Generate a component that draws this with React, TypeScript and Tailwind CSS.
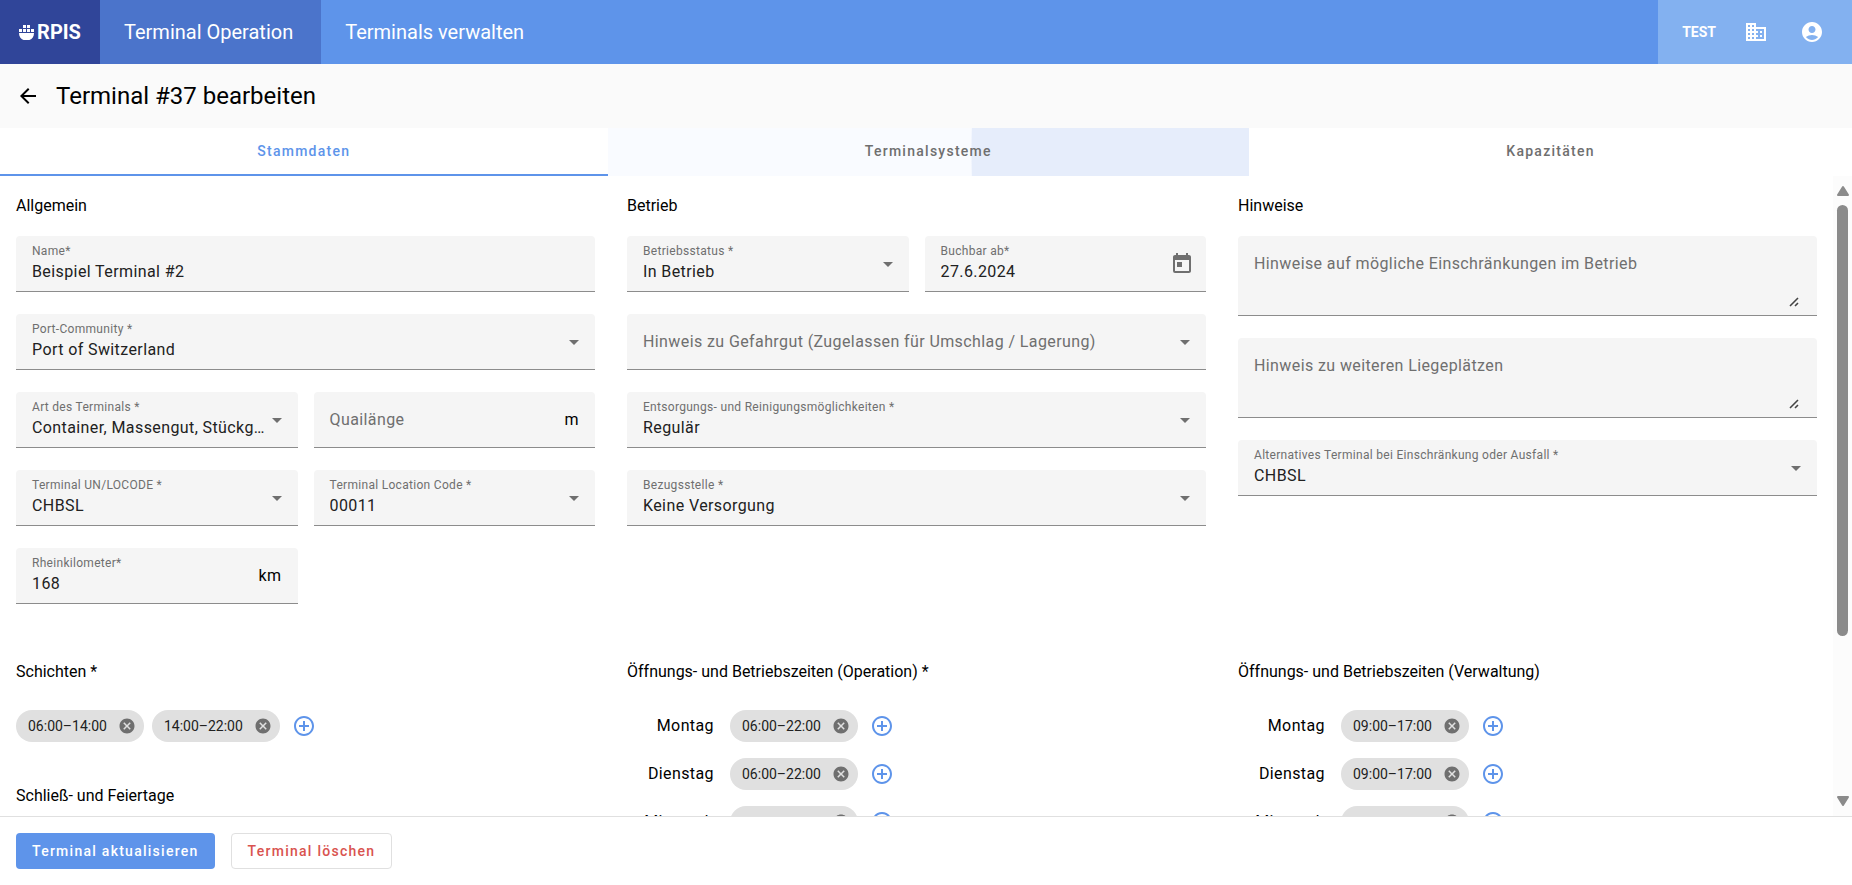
import { useId, type ReactNode } from "react";
import {
  MdAccountCircle,
  MdAddCircleOutline,
  MdArrowBack,
  MdArrowDropDown,
  MdCancel,
  MdDomain,
  MdToday,
} from "react-icons/md";

const DAYS = ["Montag", "Dienstag", "Mittwoch", "Donnerstag", "Freitag", "Samstag", "Sonntag"];

function Logo() {
  return (
    <svg viewBox="0 0 15 15" className="size-[15px] fill-white" aria-hidden="true">
      <rect x="4" y="0" width="3" height="3" />
      <rect x="8" y="0" width="3" height="3" />
      <rect x="0" y="4" width="3" height="3" />
      <rect x="4" y="4" width="3" height="3" />
      <rect x="8" y="4" width="3" height="3" />
      <rect x="12" y="4" width="3" height="3" />
      <path d="M0 8h15c0 4.500-3 7.500-7.500 7.500S0 12.500 0 8z" />
    </svg>
  );
}

type FieldProps = { label: string; value?: string };

const BOX = "relative h-14 min-w-0 rounded-t bg-[#f5f5f5] border-b border-[#8c8c8c]";
const FLOAT_LABEL =
  "pointer-events-none absolute left-4 top-2 text-xs leading-[14px] tracking-wide text-[#6f6f6f]";
const EMPTY_LABEL =
  "pointer-events-none absolute left-4 top-4 text-base leading-6 tracking-wide text-[#6f6f6f]";
const CONTROL =
  "h-full w-full truncate appearance-none bg-transparent pl-4 pt-5 pb-1 text-base leading-6 tracking-wide text-[#212121] outline-none";

function TextField({ label, value, suffix }: FieldProps & { suffix?: ReactNode }) {
  const id = useId();
  return (
    <div className={`${BOX} flex items-center`}>
      <label htmlFor={id} className={value ? FLOAT_LABEL : EMPTY_LABEL}>
        {label}
      </label>
      <input id={id} defaultValue={value} className={CONTROL} />
      {suffix && <span className="shrink-0 pr-4 text-base tracking-wide text-black">{suffix}</span>}
    </div>
  );
}

function DateField({ label, value }: FieldProps) {
  const id = useId();
  return (
    <div className={`${BOX} flex items-center`}>
      <label htmlFor={id} className={FLOAT_LABEL}>
        {label}
      </label>
      <input id={id} defaultValue={value} className={CONTROL} />
      <button type="button" aria-label="Kalender öffnen" className="shrink-0 px-3 text-[#6f6f6f]">
        <MdToday className="size-6" />
      </button>
    </div>
  );
}

function SelectField({ label, value }: FieldProps) {
  const id = useId();
  return (
    <div className={BOX}>
      <label htmlFor={id} className={value ? FLOAT_LABEL : EMPTY_LABEL}>
        {label}
      </label>
      <select id={id} className={`${CONTROL} pr-7`}>
        <option>{value ?? ""}</option>
      </select>
      <MdArrowDropDown className="pointer-events-none absolute right-[9px] top-4 size-6 text-[#6f6f6f]" />
    </div>
  );
}

function NoteField({ label }: FieldProps) {
  const id = useId();
  return (
    <div className="relative flex h-20 rounded-t border-b border-[#8c8c8c] bg-[#f5f5f5]">
      <label htmlFor={id} className={EMPTY_LABEL}>
        {label}
      </label>
      <textarea
        id={id}
        className="w-full resize-none bg-transparent px-4 pt-4 text-base leading-6 tracking-wide outline-none"
      />
      <svg viewBox="0 0 10 10" className="absolute bottom-2 right-[18px] size-[10px]" aria-hidden="true">
        <path d="M1 9 9 1M6 9l3-3" stroke="#444" strokeWidth="1.6" fill="none" />
      </svg>
    </div>
  );
}

function Chip({ time }: { time: string }) {
  return (
    <span className="flex h-8 items-center gap-[11px] rounded-full bg-[#e0e0e0] pl-3 pr-2 text-sm text-[#212121]">
      {time}
      <button type="button" aria-label={`${time} entfernen`} className="text-[#6f6f6f]">
        <MdCancel className="size-[18px]" />
      </button>
    </span>
  );
}

function AddButton() {
  return (
    <button type="button" aria-label="Zeit hinzufügen" className="ml-1 text-[#5e94ea]">
      <MdAddCircleOutline className="size-6" />
    </button>
  );
}

function Heading({ children }: { children: ReactNode }) {
  return <h2 className="text-base leading-7 text-black">{children}</h2>;
}

function Hours({ title, time }: { title: string; time: string }) {
  return (
    <section className="flex flex-col gap-6">
      <Heading>{title}</Heading>
      <div className="flex flex-col gap-4">
        {DAYS.map((day) => (
          <div key={day} className="flex items-center gap-2">
            <span className="mr-2 w-[87px] text-right text-base tracking-wide">{day}</span>
            <Chip time={time} />
            <AddButton />
          </div>
        ))}
      </div>
    </section>
  );
}

export default function App() {
  return (
    <div className="flex h-screen flex-col bg-white font-[Roboto,sans-serif] text-black">
      <header className="flex h-16 shrink-0 bg-[#5e94ea] text-white">
        <a href="#" className="flex w-[100px] items-center justify-center gap-[3px] bg-[#304599]">
          <Logo />
          <span className="text-xl font-bold">RPIS</span>
        </a>
        <a href="#" className="flex items-center bg-[#4b74cb] pl-6 pr-7 text-xl">
          Terminal Operation
        </a>
        <span className="flex items-center px-6 text-xl">Terminals verwalten</span>
        <div className="ml-auto flex items-center bg-[#83b1f0] px-6">
          <span className="mr-7 text-sm font-bold">TEST</span>
          <button type="button" aria-label="Organisation" className="mr-8">
            <MdDomain className="size-6" />
          </button>
          <button type="button" aria-label="Benutzerkonto" className="mr-1">
            <MdAccountCircle className="size-6" />
          </button>
        </div>
      </header>

      <div className="flex h-16 shrink-0 items-center gap-4 bg-[#fafafa] px-4">
        <a href="#" aria-label="Zurück">
          <MdArrowBack className="size-6" />
        </a>
        <h1 className="text-2xl">Terminal #37 bearbeiten</h1>
      </div>

      <nav className="flex h-12 shrink-0 text-sm font-medium tracking-[0.09em] text-[#6f6f6f]">
        <button type="button" className="flex-auto border-b-2 border-[#5e94ea] px-6 text-[#5e94ea]">
          Stammdaten
        </button>
        <button
          type="button"
          className="flex-auto bg-[#f9fbff] bg-[radial-gradient(circle_at_1234px_24px,#e6edfb_870px,transparent_871px)] px-6 pb-0.5"
        >
          Terminalsysteme
        </button>
        <button type="button" className="flex-auto px-6 pb-0.5">
          Kapazitäten
        </button>
      </nav>

      <div className="flex min-h-0 flex-1">
        <main className="min-w-0 flex-1 overflow-y-auto p-4 [scrollbar-width:none]">
          <div className="grid grid-cols-3 gap-x-8 gap-y-[54px]">
            <section>
              <Heading>Allgemein</Heading>
              <div className="mt-4 grid grid-cols-2 gap-x-4 gap-y-[22px]">
                <div className="col-span-2">
                  <TextField label="Name*" value="Beispiel Terminal #2" />
                </div>
                <div className="col-span-2">
                  <SelectField label="Port-Community *" value="Port of Switzerland" />
                </div>
                <SelectField label="Art des Terminals *" value="Container, Massengut, Stückg…" />
                <TextField label="Quailänge" suffix="m" />
                <SelectField label="Terminal UN/LOCODE *" value="CHBSL" />
                <SelectField label="Terminal Location Code *" value="00011" />
                <TextField label="Rheinkilometer*" value="168" suffix="km" />
              </div>
            </section>
            <section>
              <Heading>Betrieb</Heading>
              <div className="mt-4 grid grid-cols-2 gap-x-4 gap-y-[22px]">
                <SelectField label="Betriebsstatus *" value="In Betrieb" />
                <DateField label="Buchbar ab*" value="27.6.2024" />
                <div className="col-span-2">
                  <SelectField label="Hinweis zu Gefahrgut (Zugelassen für Umschlag / Lagerung)" />
                </div>
                <div className="col-span-2">
                  <SelectField label="Entsorgungs- und Reinigungsmöglichkeiten *" value="Regulär" />
                </div>
                <div className="col-span-2">
                  <SelectField label="Bezugsstelle *" value="Keine Versorgung" />
                </div>
              </div>
            </section>
            <section>
              <Heading>Hinweise</Heading>
              <div className="mt-4 grid gap-y-[22px]">
                <NoteField label="Hinweise auf mögliche Einschränkungen im Betrieb" />
                <NoteField label="Hinweis zu weiteren Liegeplätzen" />
                <SelectField label="Alternatives Terminal bei Einschränkung oder Ausfall *" value="CHBSL" />
              </div>
            </section>

            <div className="flex flex-col gap-10">
              <section className="flex flex-col gap-6">
                <Heading>Schichten *</Heading>
                <div className="flex items-center gap-2">
                  <Chip time="06:00–14:00" />
                  <Chip time="14:00–22:00" />
                  <AddButton />
                </div>
              </section>
              <Heading>Schließ- und Feiertage</Heading>
            </div>
            <Hours title="Öffnungs- und Betriebszeiten (Operation) *" time="06:00–22:00" />
            <Hours title="Öffnungs- und Betriebszeiten (Verwaltung)" time="09:00–17:00" />
          </div>
        </main>
        <div className="flex w-[19px] shrink-0 flex-col items-center bg-[#fcfcfc] py-[9px]" aria-hidden="true">
          <svg viewBox="0 0 12 12" className="size-3">
            <path d="M6 2 11 10H1z" fill="#8b8b8b" stroke="#8b8b8b" strokeWidth="2" strokeLinejoin="round" />
          </svg>
          <div className="my-2 w-full flex-1 px-1">
            <div className="h-[74%] rounded-full bg-[#8b8b8b]" />
          </div>
          <svg viewBox="0 0 12 12" className="size-3">
            <path d="M6 10 1 2h10z" fill="#8b8b8b" stroke="#8b8b8b" strokeWidth="2" strokeLinejoin="round" />
          </svg>
        </div>
      </div>

      <footer className="flex shrink-0 gap-4 border-t border-[#e0e0e0] p-4 text-sm font-medium tracking-[0.09em]">
        <button type="button" className="h-9 rounded bg-[#5e94ea] px-4 text-white">
          Terminal aktualisieren
        </button>
        <button type="button" className="h-9 rounded border border-[#e0e0e0] px-4 text-[#d9534f]">
          Terminal löschen
        </button>
      </footer>
    </div>
  );
}
